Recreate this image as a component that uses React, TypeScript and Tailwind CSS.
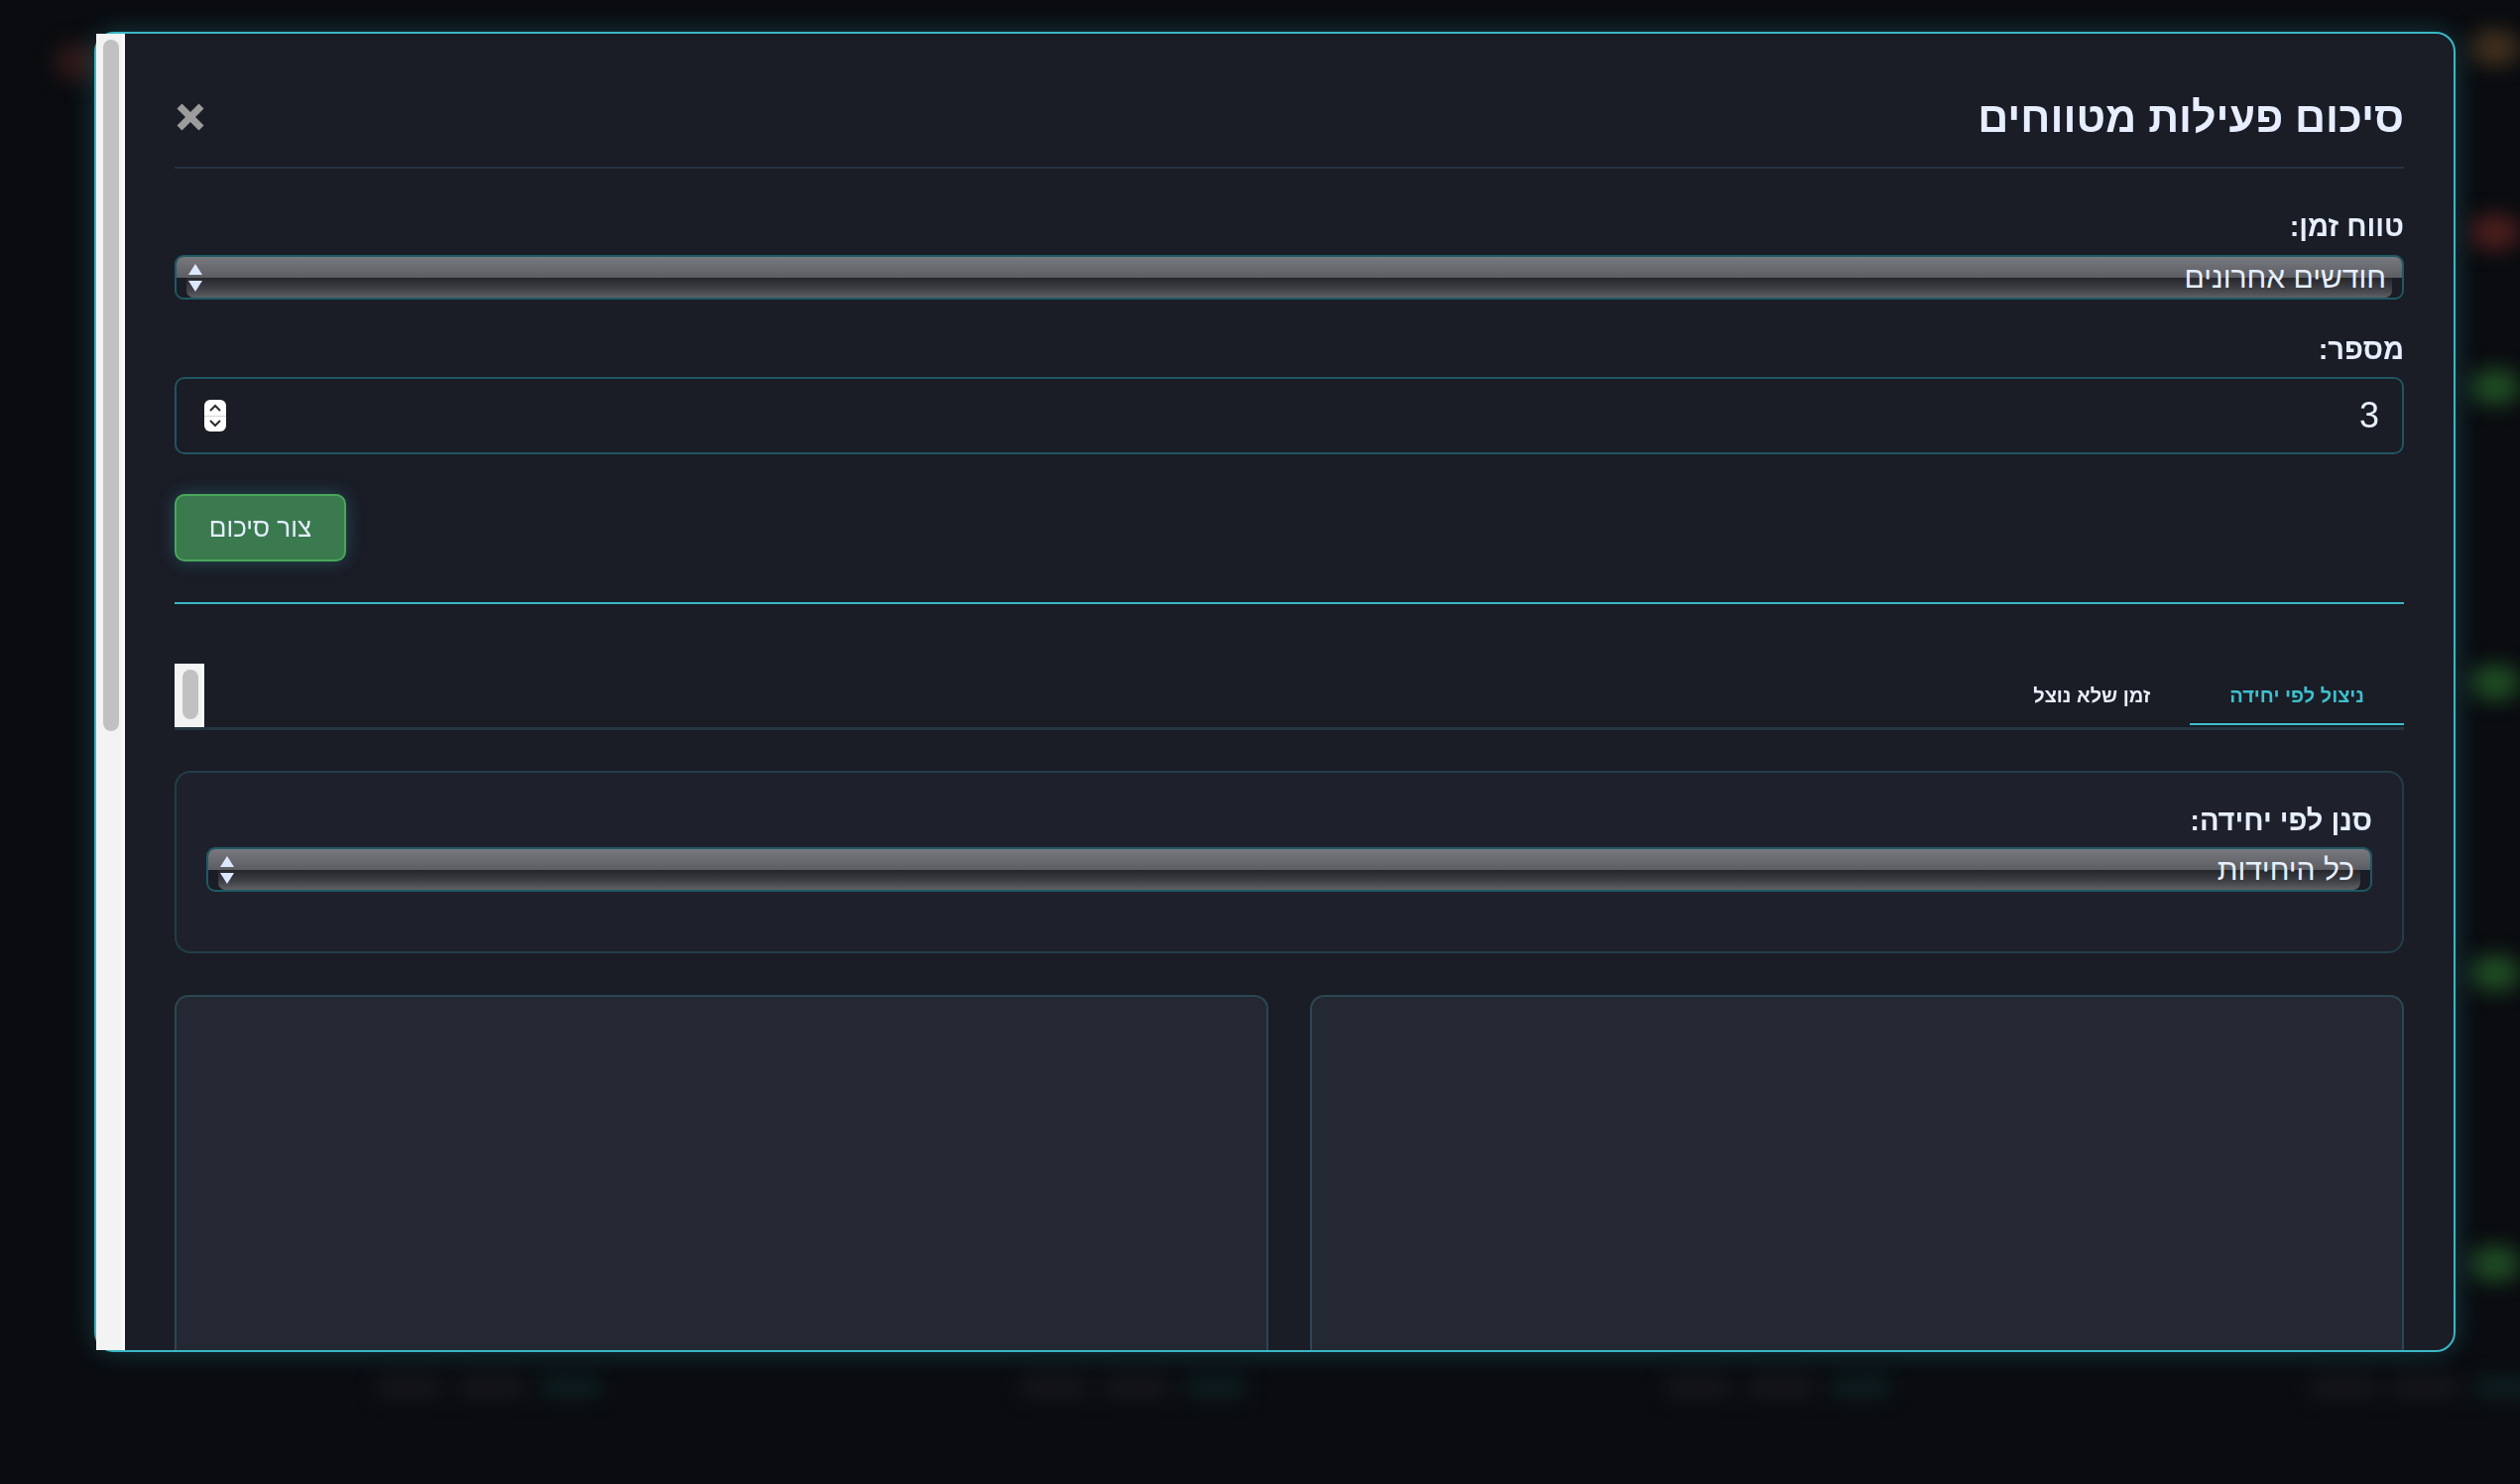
import React from 'react';

const sideGlows = [
  { id: 'a', cls: 'mt-[30px] bg-[#3f2f1e]' },
  { id: 'b', cls: 'mt-[150px] bg-[#4a1d1d]' },
  { id: 'c', cls: 'mt-[120px] bg-[#1f4a24]' },
  { id: 'd', cls: 'mt-[262px] bg-[#1f4a24]' },
  { id: 'e', cls: 'mt-[257px] bg-[#1f4a24]' },
  { id: 'f', cls: 'mt-[257px] bg-[#1f4a24]' },
];

function UpDownArrows() {
  return (
    <svg width="14" height="28" viewBox="0 0 14 28" className="shrink-0">
      <path d="M7 0 L14 11 L0 11 Z" fill="#dce8ff" />
      <path d="M0 17 L14 17 L7 28 Z" fill="#dce8ff" />
    </svg>
  );
}

function GlossySelect({ label }: { label: string }) {
  return (
    <div className="grid h-[45px] overflow-hidden rounded-[9px] border-2 border-[#1e5964] bg-[#1a1c26]">
      <div className="flex flex-col [grid-area:1/1]">
        <div className="h-[21px] bg-[linear-gradient(180deg,#78797e,#5c5d62)]" />
        <div className="mx-[10px] flex-1 rounded-b-[7px] bg-[linear-gradient(180deg,#25262c,#3f4046_55%,#5e5f64)]" />
      </div>
      <div className="flex items-center justify-between pl-[12px] pr-[16px] [grid-area:1/1]">
        <span className="text-[30px] leading-none text-[#e6efff]">{label}</span>
        <UpDownArrows />
      </div>
    </div>
  );
}

function Spinner() {
  return (
    <div className="ml-[28px] flex h-[32px] w-[22px] flex-col self-center justify-self-end overflow-hidden rounded-[6px] bg-white [grid-area:1/1]">
      <div className="flex flex-1 items-center justify-center border-b border-[#d4d4d4]">
        <svg width="12" height="8" viewBox="0 0 12 8" fill="none" stroke="#2d2d2d" strokeWidth={2}>
          <path d="M1 7 L6 2 L11 7" />
        </svg>
      </div>
      <div className="flex flex-1 items-center justify-center">
        <svg width="12" height="8" viewBox="0 0 12 8" fill="none" stroke="#2d2d2d" strokeWidth={2}>
          <path d="M1 1 L6 6 L11 1" />
        </svg>
      </div>
    </div>
  );
}

export default function App() {
  return (
    <div className="h-[1496px] overflow-hidden bg-[#0a0c10] font-['Liberation_Sans',Arial,sans-serif]">
      {/* Blurred dashboard behind the modal */}
      <div className="flex h-full flex-col blur-[10px]">
        <div className="flex flex-1 justify-between">
          <div className="flex w-[140px] flex-col">
            <div className="ml-[55px] mt-[42px] h-[40px] w-[45px] rounded-full bg-[#2e1818]" />
          </div>
          <div className="flex w-[60px] flex-col items-end">
            {sideGlows.map((g) => (
              <div key={g.id} className={`h-[36px] w-[50px] rounded-full ${g.cls}`} />
            ))}
          </div>
        </div>
        <div className="flex h-[130px] items-start gap-[424px] pl-[380px] pt-[22px]">
          {['a', 'b', 'c', 'd'].map((k) => (
            <div key={k} className="flex shrink-0 gap-[18px]">
              <div className="h-[20px] w-[65px] rounded bg-[#17181b]" />
              <div className="h-[20px] w-[65px] rounded bg-[#17181b]" />
              <div className="h-[20px] w-[60px] rounded bg-[#0e2022]" />
            </div>
          ))}
        </div>
      </div>

      {/* Modal */}
      <div className="fixed inset-0 pl-[95px] pt-[32px]">
        <div className="flex h-[1331px] w-[2381px] rounded-[20px] border-2 border-[#39b7c5] bg-[#1a1c26] shadow-[0_0_28px_rgba(57,183,197,0.28)]">
          {/* scrollbar */}
          <div className="flex w-[29px] shrink-0 flex-col border-r-[3px] border-[#fafafa] bg-[#f3f3f3] pl-[7px] pr-[3px] pt-[6px]">
            <div className="h-[697px] rounded-full bg-[#c1c1c1]" />
          </div>

          <div dir="rtl" className="flex-1 overflow-hidden rounded-r-[18px]">
            <div className="flex flex-col px-[50px] pt-[50px]">
              {/* Header */}
              <div className="flex items-center justify-between border-b-2 border-[#253240] pb-[26px] pt-[10px]">
                <h2 className="text-[43px] font-bold leading-[48px] text-[#e6eeff]">סיכום פעילות מטווחים</h2>
                <button className="ml-[2px] flex h-[28px] w-[28px] items-center justify-center">
                  <svg width="28" height="28" viewBox="0 0 28 28" stroke="#9c9c9c" strokeWidth={7}>
                    <line x1="3" y1="3" x2="25" y2="25" />
                    <line x1="25" y1="3" x2="3" y2="25" />
                  </svg>
                </button>
              </div>

              {/* Range */}
              <label className="mt-[41px] text-[29px] font-bold leading-[34px] text-[#e6eeff]">טווח זמן:</label>
              <div className="mt-[12px]">
                <GlossySelect label="חודשים אחרונים" />
              </div>

              <label className="mt-[33px] text-[29px] font-bold leading-[34px] text-[#e6eeff]">מספר:</label>
              <div className="mt-[11px] grid h-[78px] rounded-[10px] border-2 border-[#1f5560]">
                <input
                  type="text"
                  readOnly
                  value="3"
                  className="bg-transparent pr-[23px] text-right text-[36px] text-[#e6efff] outline-none [grid-area:1/1]"
                />
                <Spinner />
              </div>

              <button className="mt-[40px] h-[68px] w-[173px] self-end rounded-[10px] border-2 border-[#49a75a] bg-[#3a7a4e] text-[26px] text-[#e3eeff] shadow-[0_0_18px_rgba(64,190,200,0.3)]">
                צור סיכום
              </button>

              <div className="mt-[41px] h-[2px] bg-[#39b7c5]" />

              {/* Tabs */}
              <div className="mt-[60px] flex h-[67px] items-start border-b-[3px] border-[#263442]">
                <button className="h-[62px] border-b-2 border-[#3bbfcc] px-[40px] pt-[4px] text-[20px] font-bold text-[#3dc0cd]">
                  ניצול לפי יחידה
                </button>
                <button className="h-[62px] border-b-2 border-transparent px-[40px] pt-[4px] text-[20px] font-bold text-[#e8eefc]">
                  זמן שלא נוצל
                </button>
                <div className="mr-auto flex h-[64px] w-[30px] flex-col border-r-[3px] border-[#fafafa] bg-[#f3f3f3] pl-[8px] pr-[3px] pt-[6px]">
                  <div className="h-[50px] rounded-full bg-[#c1c1c1]" />
                </div>
              </div>

              {/* Unit filter */}
              <div className="mt-[41px] flex flex-col rounded-[16px] border-2 border-[#223e49] bg-[#1e212c] px-[30px] pb-[60px] pt-[31px]">
                <label className="text-[29px] font-bold leading-[34px] text-[#e6eeff]">סנן לפי יחידה:</label>
                <div className="mt-[10px]">
                  <GlossySelect label="כל היחידות" />
                </div>
              </div>

              {/* Charts */}
              <div className="mt-[42px] grid grid-cols-2 gap-[42px]">
                <div className="h-[700px] rounded-[14px] border-2 border-[#2a4852] bg-[#242833]" />
                <div className="h-[700px] rounded-[14px] border-2 border-[#2a4852] bg-[#242833]" />
              </div>
            </div>
          </div>
        </div>
      </div>
    </div>
  );
}
